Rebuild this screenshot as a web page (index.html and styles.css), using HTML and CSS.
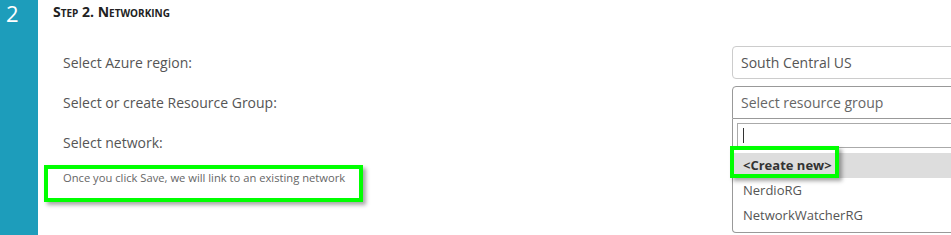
FILE: index.html
```html
<!DOCTYPE html>
<html>
<head>
<meta charset="utf-8">
<link rel="stylesheet" href="styles.css">
</head>
<body>
<div class="step">
  <div class="step-num">2</div>
  <div class="step-body">
    <h2 class="step-title">Step 2. Networking</h2>
    <div class="form">
      <div class="row">
        <div class="label">Select Azure region:</div>
        <div class="control">
          <div class="select">South Central US</div>
        </div>
      </div>
      <div class="row">
        <div class="label">Select or create Resource Group:</div>
        <div class="control">
          <div class="select open placeholder">Select resource group</div>
          <div class="dropdown">
            <div class="search"><span class="caret"></span></div>
            <ul class="options">
              <li class="option active">&lt;Create new&gt;</li>
              <li class="option">NerdioRG</li>
              <li class="option">NetworkWatcherRG</li>
            </ul>
            <div class="highlight hl-create"></div>
          </div>
        </div>
      </div>
      <div class="row">
        <div class="label">Select network:</div>
        <div class="control"></div>
      </div>
      <div class="help">
        Once you click Save, we will link to an existing network
        <div class="highlight hl-help"></div>
      </div>
    </div>
  </div>
</div>
</body>
</html>
```

FILE: styles.css
```css
* { box-sizing: border-box; }
html, body {
  margin: 0;
  padding: 0;
  width: 951px;
  height: 235px;
  overflow: hidden;
  background: #fff;
  font-family: "Open Sans", "Noto Sans", sans-serif;
}
.step {
  display: flex;
  height: 235px;
}
.step-num {
  width: 38px;
  flex: none;
  background: #1d9dbb;
  color: #fff;
  font-size: 22px;
  line-height: 26px;
  padding-left: 6px;
}
.step-body {
  flex: 1;
  padding-left: 15px;
  min-width: 0;
}
.step-title {
  margin: 0;
  padding-top: 3px;
  font-size: 14px;
  line-height: 18px;
  font-weight: 700;
  font-variant: small-caps;
  color: #222;
}
.form {
  padding-top: 25px;
  padding-left: 10px;
}
.row {
  display: grid;
  grid-template-columns: 669px 260px;
  height: 40px;
}
.label {
  font-size: 14px;
  line-height: 33px;
  color: #555;
}
.control {
  position: relative;
}
.select {
  height: 33px;
  border: 1px solid #ccc;
  border-radius: 4px;
  padding-left: 8px;
  font-size: 14px;
  line-height: 31px;
  color: #555;
}
.select.open {
  border-color: #999;
  border-bottom-left-radius: 0;
  border-bottom-right-radius: 0;
}
.select.placeholder { color: #666; }
.dropdown {
  position: absolute;
  top: 33px;
  left: 0;
  width: 260px;
  height: 114px;
  background: #fff;
  border: 1px solid #999;
  border-top: none;
  border-radius: 0 0 4px 4px;
  padding-top: 4px;
  z-index: 2;
}
.search {
  margin: 0 4px;
  height: 25px;
  border: 1px solid #aaa;
  position: relative;
}
.caret {
  position: absolute;
  left: 5px;
  top: 4px;
  width: 1px;
  height: 15px;
  background: #333;
}
.options {
  list-style: none;
  margin: 5px 0 0;
  padding: 0;
}
.option {
  height: 25px;
  line-height: 25px;
  padding-left: 10px;
  font-size: 13px;
  color: #555;
}
.option.active {
  background: #ddd;
  color: #333;
  font-weight: 700;
}
.help {
  position: relative;
  font-size: 11.2px;
  color: #666;
  line-height: 16px;
  margin-top: 4px;
}
.highlight {
  position: absolute;
  border: 4px solid #00ff00;
  box-shadow: 3px 3px 4px rgba(0, 0, 0, 0.35);
}
.hl-help {
  left: -19px;
  top: -5px;
  width: 319px;
  height: 37px;
}
.hl-create {
  left: -3px;
  top: 27px;
  width: 109px;
  height: 32px;
}
```
